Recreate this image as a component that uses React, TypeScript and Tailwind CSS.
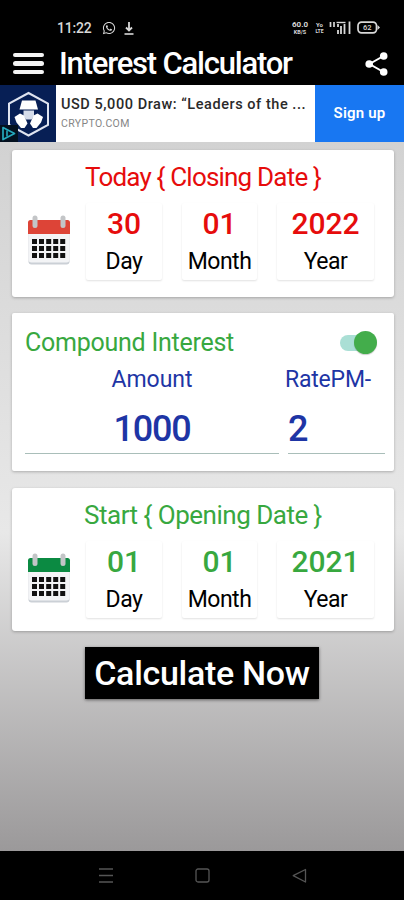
import { FaWhatsapp } from 'react-icons/fa'

type DateCardProps = {
  title: string
  titleClass: string
  valueClass: string
  iconColor: string
  className: string
  day: string
  month: string
  year: string
}

function StatusBar() {
  return (
    <div className="flex h-[42px] items-end justify-between pr-[24px] pb-[7px] pl-[57px] text-[#d8d8d8]">
      <div className="flex items-center">
        <span className="w-[35px] text-[14px] leading-[14px] font-medium tracking-[-0.2px]">11:22</span>
        <FaWhatsapp className="ml-[10px] h-[14px] w-[14px]" />
        <svg className="ml-[8px] h-[13px] w-[10px]" viewBox="0 0 10 13">
          <path d="M5 0v8M2 5.500 5 8.500l3-3" fill="none" stroke="currentColor" strokeWidth="1.800" />
          <path d="M0.500 12h9" stroke="currentColor" strokeWidth="1.600" />
        </svg>
      </div>
      <div className="flex items-center">
        <div className="flex w-[20px] flex-col items-center font-bold">
          <span className="text-[8px] leading-[9px]">60.0</span>
          <span className="text-[5.5px] leading-[6px]">KB/S</span>
        </div>
        <div className="ml-[5px] flex w-[9px] flex-col items-center font-bold">
          <span className="text-[6px] leading-[7px]">Yo</span>
          <span className="text-[5px] leading-[6px]">LTE</span>
        </div>
        <svg className="ml-[5px] h-[13px] w-[22px]" viewBox="0 0 22 13">
          <path d="M1.500 1v5M5 1v5" stroke="currentColor" strokeWidth="1.700" />
          <path d="M7.500 1.500h9" stroke="currentColor" strokeWidth="1.400" />
          <path d="M9 3v3M9 9v4M12 5v8M15.500 3v10M20.500 0.500v12.500" stroke="currentColor" strokeWidth="1.800" />
        </svg>
        <svg className="ml-[6px] h-[13px] w-[23px]" viewBox="0 0 23 13">
          <rect x="1" y="1.200" width="18.500" height="10.600" rx="3.500" fill="none" stroke="currentColor" strokeWidth="1.700" />
          <path d="M20.500 4 23 6.500l-2.500 2.500z" fill="currentColor" />
          <text x="10.300" y="9.200" textAnchor="middle" fontSize="7.500" fontWeight="500" fill="currentColor">
            62
          </text>
        </svg>
      </div>
    </div>
  )
}

function TitleBar() {
  return (
    <header className="flex h-[43px] items-center pr-[15px] pl-[13px] text-white">
      <div className="flex w-[31px] flex-col gap-[4px]">
        <span className="h-[4.5px] rounded-full bg-[#f4f4f4]" />
        <span className="h-[4.5px] rounded-full bg-[#f4f4f4]" />
        <span className="h-[4.5px] rounded-full bg-[#f4f4f4]" />
      </div>
      <h1 className="ml-[15px] text-[31px] leading-[43px] font-medium tracking-[-1.2px] whitespace-nowrap">
        Interest Calculator
      </h1>
      <svg className="mr-[1px] ml-auto h-[24px] w-[23px]" viewBox="0 0 23 24" fill="currentColor">
        <path d="M18.500 4 4.500 12l14 8" fill="none" stroke="currentColor" strokeWidth="2" />
        <circle cx="18.700" cy="4" r="3.800" />
        <circle cx="4.200" cy="12" r="3.800" />
        <circle cx="18.700" cy="20" r="3.800" />
      </svg>
    </header>
  )
}

function AdBanner() {
  return (
    <div className="flex h-[57px] bg-white">
      <div className="relative w-[56px] bg-[#071f55]">
        <svg className="h-[57px] w-[56px]" viewBox="0 0 56 57">
          <path d="M28.500 8 48 18.500v21.500L28.500 50.500 9 40V18.500z" fill="none" stroke="#dfe4f0" strokeWidth="2" />
          <path d="M22 15.500h13.500l2.500 9H19.500z" fill="#fff" />
          <path d="M23.500 25.500h10.500v5.500l-2.500 3.500h-5.500l-2.500-3.500z" fill="#d5dcea" />
          <path d="M20 28.500 14.500 32l2 5.500 4.500 5.500h3.500l3-4.500-3.500-8z" fill="#fff" />
          <path d="M37.500 28.500 43 32l-2 5.500-4.500 5.500H33l-3-4.500 3.500-8z" fill="#fff" />
        </svg>
        <div className="absolute bottom-0 left-0 h-[17px] w-[18px] bg-[#04111f]">
          <svg className="h-[17px] w-[18px]" viewBox="0 0 18 17">
            <path d="M3 2.500 14.500 8.500 3 14.500z" fill="none" stroke="#25a9bd" strokeWidth="1.700" strokeLinejoin="round" />
            <path d="M7 5.500v6" stroke="#25a9bd" strokeWidth="1.600" />
          </svg>
        </div>
      </div>
      <div className="w-[259px] pt-[11px] pl-[5px]">
        <p className="text-[14.5px] leading-[17px] font-medium tracking-[0.55px] whitespace-nowrap text-[#2a2a2a]">
          USD 5,000 Draw: “Leaders of the ...
        </p>
        <p className="mt-[4px] text-[10.5px] leading-[13px] tracking-[0.4px] text-[#858585]">CRYPTO.COM</p>
      </div>
      <div className="flex flex-1 items-center justify-center bg-[#1877f2] text-[15px] font-semibold tracking-[0.2px] text-white">
        Sign up
      </div>
    </div>
  )
}

function Calendar({ color }: { color: string }) {
  return (
    <svg className="h-[52px] w-[44px]" viewBox="0 0 44 52">
      <rect x="1.500" y="6" width="41" height="43.500" rx="3" fill="#cbd0d6" />
      <rect x="1.500" y="6" width="41" height="41.500" rx="3" fill="#f3f4f6" />
      <path d="M1 19V7.500q0-2.500 2.500-2.500h37q2.500 0 2.500 2.500V19z" fill={color} />
      <rect x="5.500" y="0.500" width="5" height="12.500" rx="2.500" fill="#c3c5c7" />
      <rect x="33.500" y="0.500" width="5" height="12.500" rx="2.500" fill="#c3c5c7" />
      {[24, 31, 38].map((y) =>
        [5, 12, 19.2, 26.2, 33.2].map((x) => (
          <rect key={`${x}-${y}`} x={x} y={y} width="5" height="5" fill="#111" />
        ))
      )}
    </svg>
  )
}

function DateField({ value, label, className }: { value: string; label: string; className: string }) {
  return (
    <div className={`flex h-[77px] flex-col items-center rounded-[2px] shadow-[0_1px_2px_rgba(0,0,0,0.12)] ${className}`}>
      <span className="mt-[5px] text-[30px] leading-[32px] font-medium">{value}</span>
      <span className="mt-[7px] text-[23px] leading-[30px] tracking-[-0.5px] text-black">{label}</span>
    </div>
  )
}

function DateCard({ title, titleClass, valueClass, iconColor, className, day, month, year }: DateCardProps) {
  return (
    <section className={`rounded-[3px] bg-white shadow-[0_1px_3px_rgba(0,0,0,0.25)] ${valueClass} ${className}`}>
      <h2 className={`text-center leading-[32px] whitespace-nowrap ${titleClass}`}>{title}</h2>
      <div className="mt-[10px] flex">
        <div className="mt-[12px] mr-[15px] ml-[15px]">
          <Calendar color={iconColor} />
        </div>
        <DateField value={day} label="Day" className="w-[76px]" />
        <DateField value={month} label="Month" className="ml-[20px] w-[75px]" />
        <DateField value={year} label="Year" className="ml-[20px] w-[97px]" />
      </div>
    </section>
  )
}

function InterestCard() {
  return (
    <section className="mt-[16px] h-[158px] rounded-[2px] bg-white pl-[13px] shadow-[0_1px_3px_rgba(0,0,0,0.25)]">
      <div className="flex h-[52px] items-center justify-between pt-[7px] pr-[17px]">
        <h2 className="text-[25px] leading-[30px] tracking-[-0.25px] whitespace-nowrap text-[#38a83f]">
          Compound Interest
        </h2>
        <div className="flex h-[24px] w-[37px] items-center justify-end">
          <span className="-mr-[14px] h-[16px] w-[28px] rounded-full bg-[#aadfd5]" />
          <span className="z-10 h-[23px] w-[23px] rounded-full bg-[#43ad4b] shadow-[0_1px_1px_rgba(0,0,0,0.2)]" />
        </div>
      </div>
      <div className="flex text-[#1e35a5]">
        <div className="flex h-[89px] w-[254px] flex-col items-center border-b-[1.5px] border-[#a9beb9] pt-[1px]">
          <span className="text-[23px] leading-[28px]">Amount</span>
          <span className="mt-[14px] text-[36px] leading-[42px] font-medium tracking-[-1.2px]">1000</span>
        </div>
        <div className="ml-[9px] flex h-[89px] w-[97px] flex-col border-b-[1.5px] border-[#a9beb9] pt-[1px]">
          <span className="-ml-[3px] text-[23px] leading-[28px] tracking-[-0.2px] whitespace-nowrap">RatePM-</span>
          <span className="mt-[14px] text-[36px] leading-[42px] font-medium">2</span>
        </div>
      </div>
    </section>
  )
}

function NavBar() {
  return (
    <nav className="flex h-[49px] items-center bg-black pl-[99px] text-[#555]">
      <svg className="h-[15px] w-[14px]" viewBox="0 0 14 15">
        <path d="M0 1h14M0 7.500h14M0 14h14" stroke="currentColor" strokeWidth="1.600" />
      </svg>
      <svg className="ml-[82px] h-[15px] w-[15px]" viewBox="0 0 15 15">
        <rect x="1" y="1" width="13" height="13" rx="2" fill="none" stroke="currentColor" strokeWidth="1.300" />
      </svg>
      <svg className="ml-[82px] h-[16px] w-[15px]" viewBox="0 0 15 16">
        <path d="M13.500 1.500v12.500L1.200 7.700z" fill="none" stroke="currentColor" strokeWidth="1.300" strokeLinejoin="round" />
      </svg>
    </nav>
  )
}

export default function App() {
  return (
    <div className="flex h-[900px] w-[404px] flex-col overflow-hidden bg-black font-[Roboto,sans-serif]">
      <StatusBar />
      <TitleBar />
      <AdBanner />
      <main className="flex-1 bg-linear-to-b from-[#d2d2d2] via-[#e8e8e8] via-55% to-[#9b999a] pt-[8px] pr-[10px] pl-[12px]">
        <DateCard
          title="Today { Closing Date }"
          titleClass="text-[26px] tracking-[-0.8px]"
          valueClass="text-[#e60c0c]"
          iconColor="#dd4437"
          className="h-[147px] pt-[11px]"
          day="30"
          month="01"
          year="2022"
        />
        <InterestCard />
        <DateCard
          title="Start { Opening Date }"
          titleClass="text-[26px] tracking-[-0.5px]"
          valueClass="text-[#38a83f]"
          iconColor="#0b8a42"
          className="mt-[17px] h-[143px] pt-[11px]"
          day="01"
          month="01"
          year="2021"
        />
        <button className="mt-[16px] ml-[73px] block h-[52px] w-[234px] bg-black text-[34px] leading-[50px] font-medium tracking-[-0.3px] whitespace-nowrap text-white shadow-[0_1px_3px_rgba(0,0,0,0.5)]">
          Calculate Now
        </button>
      </main>
      <NavBar />
    </div>
  )
}
